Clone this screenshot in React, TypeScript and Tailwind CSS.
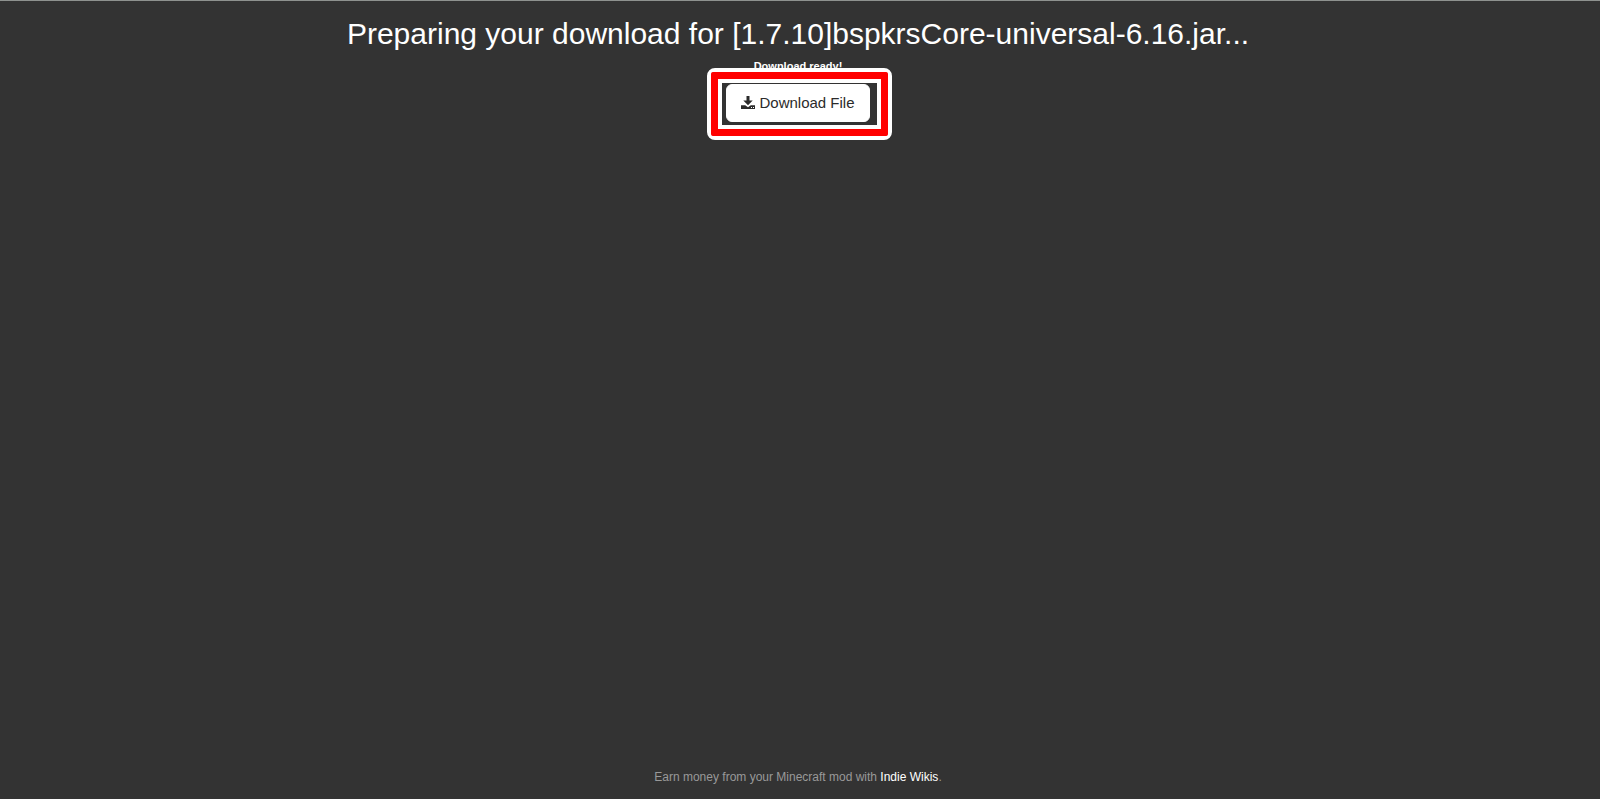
import type React from "react";

interface DownloadButtonProps {
  href: string;
  label: string;
}

const DownloadIcon: React.FC = () => (
  <svg
    className="w-[14px] h-[14px]"
    viewBox="0 0 14 14"
    fill="currentColor"
    aria-hidden="true"
  >
    <path d="M5.5 0h3v4.5h3.2L7 9.2 2.3 4.5h3.2z" />
    <path
      d="M0 9.2h4.2L7 11.2l2.8-2H14V13H0zM10 11v1h1v-1zM12 11v1h1v-1z"
      fillRule="evenodd"
    />
  </svg>
);

const DownloadButton: React.FC<DownloadButtonProps> = ({ href, label }) => (
  <div className="relative">
    <a
      href={href}
      className="flex items-center gap-1 bg-white px-3.5 py-2 border border-white rounded-md text-[#2b2b2b] text-[15px] leading-5"
    >
      <DownloadIcon />
      {label}
    </a>
    {/* highlight frame around the button */}
    <div className="absolute -top-4 -bottom-[18px] -left-[19px] -right-[22px] border-4 border-white rounded-lg pointer-events-none">
      <div className="border-[#f00] border-[7px] rounded-xs h-full">
        <div className="border-4 border-white h-full"></div>
      </div>
    </div>
  </div>
);

export default function App() {
  return (
    <div className="flex flex-col items-center bg-[#333] pr-1 border-[#8e928f] border-t min-h-screen font-['Liberation_Sans',Arial,sans-serif] text-white">
      <main className="flex flex-col flex-1 items-center pt-[15px]">
        <h1 className="text-3xl text-center leading-9">
          Preparing your download for [1.7.10]bspkrsCore-universal-6.16.jar...
        </h1>
        <p className="mt-1 mb-2 font-bold text-[11px] leading-5">
          Download ready!
        </p>
        <DownloadButton href="#download" label="Download File" />
      </main>
      <footer className="pb-3 text-[#999] text-xs leading-5">
        Earn money from your Minecraft mod with{" "}
        <a href="#wikis" className="text-white">
          Indie Wikis
        </a>
        .
      </footer>
    </div>
  );
}
